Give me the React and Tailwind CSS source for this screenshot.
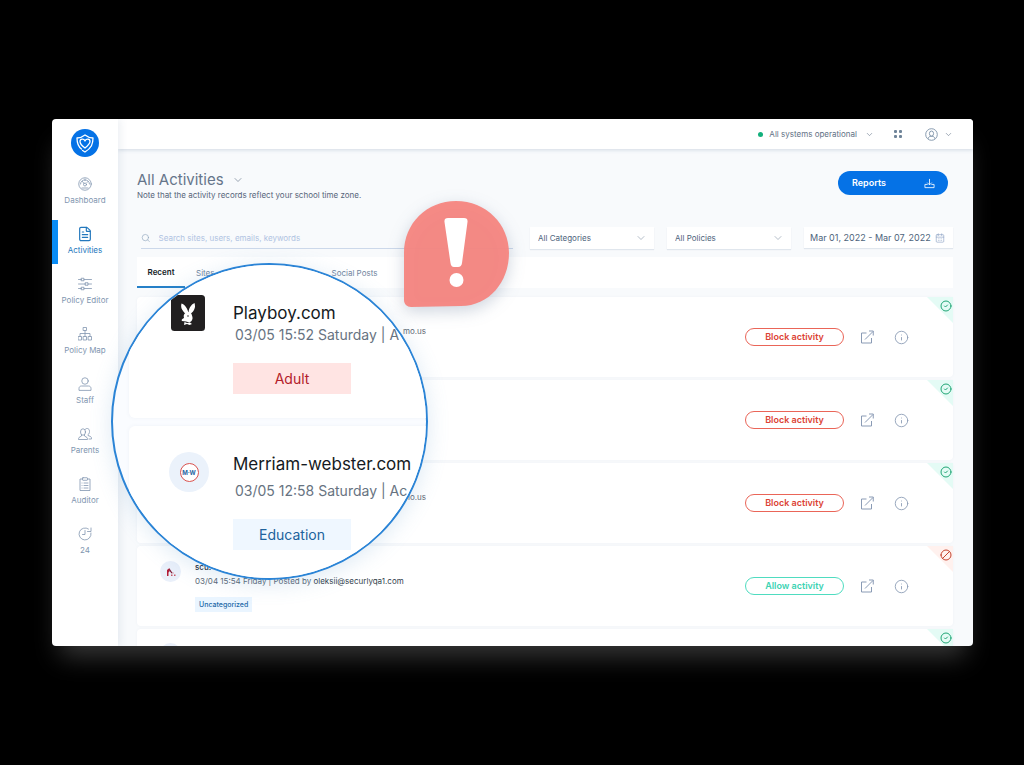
import React from "react";
import {
  CalendarDays,
  Ban,
  ChevronDown,
  CircleCheck,
  FileText,
  Info,
  Search,
} from "lucide-react";

const Icon = ({ children }) => (
  <svg
    viewBox="0 0 28 28"
    className="size-[14px]"
    fill="none"
    stroke="currentColor"
    strokeWidth="1.6"
    strokeLinecap="round"
    strokeLinejoin="round"
    aria-hidden="true"
  >
    {children}
  </svg>
);

const navItems = [
  {
    label: "Dashboard",
    icon: (
      <Icon>
        <circle cx="14" cy="14" r="12.5" />
        <circle cx="14" cy="15" r="3" />
        <path d="M12 13 9 9M5 14c0-11 18-11 18 0M8 22h12M14 4v3M20 9l-2 2" />
      </Icon>
    ),
  },
  {
    label: "Activities",
    active: true,
    icon: <FileText className="size-4" strokeWidth={1.8} />,
  },
  {
    label: "Policy Editor",
    icon: (
      <Icon>
        <path d="M1 5h6M12 5h15M1 14h14M20 14h7M1 23h6M12 23h15" />
        <rect x="7" y="2.5" width="5" height="5" />
        <rect x="15" y="11.5" width="5" height="5" />
        <rect x="7" y="20.5" width="5" height="5" />
      </Icon>
    ),
  },
  {
    label: "Policy Map",
    icon: (
      <Icon>
        <rect x="11" y="1" width="6" height="6" />
        <path d="M14 7v12M4 19v-6h20v6" />
        <rect x="1" y="19" width="6" height="7" />
        <rect x="11" y="19" width="6" height="7" />
        <rect x="21" y="19" width="6" height="7" />
      </Icon>
    ),
  },
  {
    label: "Staff",
    icon: (
      <Icon>
        <circle cx="14" cy="8" r="6.5" />
        <path d="M2 26v-3c0-3 2-5 5-5h14c3 0 5 2 5 5v3z" />
      </Icon>
    ),
  },
  {
    label: "Parents",
    icon: (
      <Icon>
        <ellipse cx="10" cy="10" rx="5" ry="6.5" />
        <path d="M7 16v2l-5 3c-1 1-1 3-1 4h18c0-1 0-3-1-4l-5-3v-2" />
        <path d="M14 5c1-3 9-4 9 4 0 3-1 5-3 6v2l5 2c2 1 2 3 2 5h-5" />
      </Icon>
    ),
  },
  {
    label: "Auditor",
    icon: (
      <Icon>
        <path d="M9 4H4v23h20V4h-5" />
        <rect x="9" y="1.5" width="10" height="5" rx="1" />
        <path d="M12 12h8M12 17h8M12 22h8M8 12h.1M8 17h.1M8 22h.1" />
      </Icon>
    ),
  },
  {
    label: "24",
    icon: (
      <Icon>
        <path d="M21 4a12 12 0 1 0 5 8M26 2v7h-7M14 7v8H9" />
      </Icon>
    ),
  },
];

const rows = [
  { id: 1, tail: "mo.us", blocked: false },
  { id: 2, blocked: false },
  { id: 3, tail: "lo.us", blocked: false },
  {
    id: 4,
    site: "scu.",
    time: "03/04 15:54 Friday | Posted by ",
    email: "oleksii@securlyqa1.com",
    category: "Uncategorized",
    blocked: true,
  },
  { id: 5, loading: true, blocked: false },
];

const Sidebar = () => (
  <aside className="z-10 flex w-[66px] shrink-0 flex-col items-center bg-white pt-[10px] shadow-[2px_0_8px_rgba(60,90,130,0.1)]">
    <a href="#home" aria-label="Home">
      <svg viewBox="0 0 56 56" className="size-7" fill="none">
        <circle cx="28" cy="28" r="28" fill="#0572e6" />
        <g
          stroke="white"
          strokeWidth="2.6"
          strokeLinecap="round"
          strokeLinejoin="round"
        >
          <path d="M21 40C14 35 12 28 12 18c6 0 11-2 16-6 5 4 10 6 16 6 0 12-3 20-16 28-2-1-3-2-5-3" />
          <path d="M28 38c-7-5-10-9-10-13 0-6 8-6 10-1 2-5 10-5 10 1 0 4-4 8-10 13z" />
        </g>
      </svg>
    </a>
    <nav className="mt-[13px] flex w-full flex-col gap-[6px]">
      {navItems.map((item) => (
        <a
          key={item.label}
          href={`#${item.label}`}
          className={
            item.active
              ? "flex h-11 flex-col items-center border-l-[6px] border-[#0a8cf5] pt-[6px] pr-[6px] text-[#2478bd]"
              : "flex h-11 flex-col items-center pt-[6px] text-[#8196b0]"
          }
        >
          <span className="flex h-4 items-center">{item.icon}</span>
          <span className="mt-[3px] text-[8px] leading-[10px] whitespace-nowrap">
            {item.label}
          </span>
        </a>
      ))}
    </nav>
  </aside>
);

const TopBar = () => (
  <header className="flex h-[30px] shrink-0 items-center justify-end bg-white pr-5 text-[#5f7185] shadow-[0_1px_4px_rgba(60,90,130,0.2)]">
    <button className="flex items-center text-[8px]">
      <span className="mr-[6px] size-[5px] rounded-full bg-[#13b07c]" />
      All systems operational
      <ChevronDown className="ml-2 size-[9px]" strokeWidth={1.5} />
    </button>
    <button className="ml-5" aria-label="Apps">
      <svg viewBox="0 0 16 16" className="size-2" fill="#6f8499">
        <rect x="0" y="0" width="6" height="6" rx="2" />
        <rect x="10" y="0" width="6" height="6" rx="2" />
        <rect x="0" y="10" width="6" height="6" rx="2" />
        <rect x="10" y="10" width="6" height="6" rx="2" />
      </svg>
    </button>
    <button className="ml-[23px] flex items-center gap-[6px]" aria-label="Account">
      <svg
        viewBox="0 0 28 28"
        className="size-[13px]"
        fill="none"
        stroke="#8094aa"
        strokeWidth="2"
      >
        <circle cx="14" cy="14" r="12.5" />
        <ellipse cx="14" cy="12" rx="4.5" ry="5.5" />
        <path d="M7 23c0-4 3-5 7-5s7 1 7 5" />
      </svg>
      <ChevronDown className="size-[9px]" strokeWidth={1.5} />
    </button>
  </header>
);

const FilterSelect = ({ label }) => (
  <div className="grid w-[124px] shrink-0 items-center bg-white shadow-[0_1px_1px_rgba(60,90,130,0.12)]">
    <select
      aria-label={label}
      className="col-start-1 row-start-1 h-[21px] w-full appearance-none px-2 text-[8px] text-[#4e647c] outline-none"
    >
      <option>{label}</option>
    </select>
    <ChevronDown
      className="pointer-events-none col-start-1 row-start-1 mr-[7px] size-3 justify-self-end text-[#8c9bac]"
      strokeWidth={1.3}
    />
  </div>
);

const Filters = () => (
  <div className="mt-[26px] flex gap-[13px]">
    <label className="mr-1 ml-1 flex h-[22px] flex-1 items-center gap-2 border-b border-[#ccd8ea]">
      <Search className="size-[10px] text-[#8fa5bd]" strokeWidth={1.6} />
      <input
        type="search"
        aria-label="Search"
        placeholder="Search sites, users, emails, keywords"
        className="w-full text-[8px] outline-none placeholder:text-[#b0c3e2]"
      />
    </label>
    <FilterSelect label="All Categories" />
    <FilterSelect label="All Policies" />
    <button className="flex h-[21px] w-[149px] shrink-0 items-center justify-between bg-white pr-2 pl-[6px] text-[9px] whitespace-nowrap text-[#4e647c] shadow-[0_1px_1px_rgba(60,90,130,0.12)]">
      Mar 01, 2022 - Mar 07, 2022
      <CalendarDays className="size-[10px] text-[#8fa5c5]" strokeWidth={1.6} />
    </button>
  </div>
);

const RowActions = ({ blocked }) => (
  <div className="ml-auto flex items-center text-[#8a9bb5]">
    <button
      className={
        blocked
          ? "h-[18px] w-[99px] rounded-full border border-[#4fdcc0] text-[9px] font-semibold text-[#3bd3b3]"
          : "h-[18px] w-[99px] rounded-full border border-[#ea6558] text-[9px] font-semibold text-[#dc4234]"
      }
    >
      {blocked ? "Allow activity" : "Block activity"}
    </button>
    <button className="ml-4" aria-label="Open site">
      <svg
        viewBox="0 0 28 28"
        className="size-[14px]"
        fill="none"
        stroke="currentColor"
        strokeWidth="2"
      >
        <path d="M13 6H3v20h20V16M10 19 26 3M18 2h8.5v9" />
      </svg>
    </button>
    <button className="ml-5" aria-label="Details">
      <Info className="size-[15px]" strokeWidth={1.4} />
    </button>
  </div>
);

const ActivityRow = ({ row }) => (
  <li className="relative flex h-20 shrink-0 items-center rounded-sm bg-white pr-11 shadow-[0_0_3px_rgba(60,90,130,0.05)]">
    {row.tail && (
      <p className="mb-3 w-[289px] text-right text-[8px] text-[#5f6a76]">
        {row.tail}
      </p>
    )}
    {row.loading && (
      <span className="mt-[14px] ml-[23px] size-[21px] self-start rounded-full bg-[#eaf0fa]" />
    )}
    {row.site && (
      <div className="flex gap-[14px] self-start pt-[15px] pl-[23px]">
        <span className="flex size-[21px] items-center justify-center rounded-full bg-[#eaf0fa]">
          <svg viewBox="0 0 20 20" className="size-[10px]">
            <path d="M2 18V6l5-4v7l-2 2v7z" fill="#b51e38" />
            <path d="m7 3 6 9-2 1-5-7z" fill="#7c1530" />
            <path d="M10 15h3v3h-3zM16 15h3v3h-3zM13 11h2v2h-2z" fill="#c65868" />
          </svg>
        </span>
        <div className="text-[8px] leading-[12px] text-[#5a6775]">
          <p className="font-medium text-[#1d2733]">{row.site}</p>
          <p className="mt-[2px] whitespace-nowrap">
            {row.time}
            <span className="text-[#333f4d]">{row.email}</span>
          </p>
          <span className="mt-[10px] inline-block bg-[#eaf5ff] px-1 py-[2px] text-[7px] leading-[11px] font-medium text-[#2369a8]">
            {row.category}
          </span>
        </div>
      </div>
    )}
    {!row.loading && <RowActions blocked={row.blocked} />}
    <span
      className={
        row.blocked
          ? "absolute top-0 right-0 size-[26px] bg-[#fff1ee] [clip-path:polygon(0_0,100%_0,100%_100%)]"
          : "absolute top-0 right-0 size-[26px] bg-[#e4fbf5] [clip-path:polygon(0_0,100%_0,100%_100%)]"
      }
    />
    {row.blocked ? (
      <Ban className="absolute top-[3px] right-[1px] size-3 -scale-x-100 text-[#c4442f]" />
    ) : (
      <CircleCheck className="absolute top-[3px] right-[1px] size-3 text-[#1fa574]" />
    )}
  </li>
);

const Lens = () => (
  <section className="absolute top-[144px] left-[59px] z-20 size-[317px] overflow-hidden rounded-full border-2 border-[#2b84d6] bg-[#fafcff] shadow-[0_4px_22px_rgba(90,150,200,0.2)]">
    <div className="ml-4 flex h-[153px] gap-7 rounded-bl-md bg-white pt-[30px] pl-[42px] shadow-[0_0_4px_rgba(60,90,130,0.06)]">
      <svg viewBox="0 0 68 72" className="h-9 w-[34px] shrink-0">
        <rect width="68" height="72" rx="7" fill="#211f20" />
        <g fill="white">
          <path d="M21 17c7 2 12 10 14 19l-5 3c-5-6-12-12-9-22z" />
          <path d="M47 16c3 9-1 16-8 22l-4-2c0-9 5-17 12-20z" />
          <path d="M29 36c6-4 12-1 13 5 2 5 1 8-1 11l-4 3-7-2-8-1c-2-2 0-4 4-6-1-4-1-8 3-10z" />
          <path d="m27 54 5 2 6-1 4 3-5 2-5-2-6 2z" />
        </g>
        <circle cx="34" cy="42" r="1.5" fill="#211f20" />
      </svg>
      <div className="whitespace-nowrap">
        <h2 className="mt-[6px] text-[17px] leading-6 text-[#151a22]">Playboy.com</h2>
        <p className="ml-[2px] text-[14px] leading-5 text-[#677381]">
          03/05 15:52 Saturday | A
        </p>
        <p className="mt-[18px] flex h-[31px] w-[118px] items-center justify-center bg-[#ffe4e3] text-[14px] text-[#b3202a]">
          Adult
        </p>
      </div>
    </div>
    <div className="mt-2 ml-4 flex h-[160px] gap-6 rounded-tl-md bg-white pt-[26px] pl-10 shadow-[0_0_4px_rgba(60,90,130,0.06)]">
      <span className="flex size-10 shrink-0 items-center justify-center rounded-full bg-[#ebf2fb]">
        <span className="flex size-[19px] items-center justify-center rounded-full border border-[#d9534f] bg-white text-[6px] font-bold text-[#27649f]">
          M·W
        </span>
      </span>
      <div className="whitespace-nowrap">
        <h2 className="text-[17px] leading-6 text-[#151a22]">Merriam-webster.com</h2>
        <p className="mt-[5px] ml-[2px] text-[14px] leading-5 text-[#677381]">
          03/05 12:58 Saturday | Ac
        </p>
        <p className="mt-[18px] flex h-[31px] w-[118px] items-center justify-center bg-[#eff7ff] text-[14px] text-[#20629c]">
          Education
        </p>
      </div>
    </div>
  </section>
);

const AlertBubble = () => (
  <svg
    viewBox="0 0 105 107"
    className="absolute top-[82px] left-[352px] z-30 h-[107px] w-[105px] drop-shadow-[0_5px_8px_rgba(50,80,120,0.25)]"
    role="img"
    aria-label="Alert"
  >
    <path
      d="M52 0C82 0 105 23 105 52s-20 53-48 53L7 106c-4 0-7-3-7-7V52C0 22 23 0 52 0z"
      fill="#f58580"
      fillOpacity="0.95"
    />
    <path
      d="M44 17h16q4 0 3.5 4L58 62q-.5 4-4 4h-4q-3 0-3.500-4L40.500 21q-.5-4 3.500-4z"
      fill="white"
    />
    <circle cx="52.5" cy="79" r="7" fill="white" />
  </svg>
);

const App = () => {
  return (
    <div className="h-screen bg-black py-[119px] pr-[51px] pl-[52px] font-[Inter,'Open_Sans',sans-serif]">
      <div className="relative flex h-full rounded shadow-[0_18px_24px_-8px_rgba(255,255,255,0.22)]">
        <div className="flex min-w-0 flex-1 overflow-hidden rounded">
          <Sidebar />
          <div className="flex min-w-0 flex-1 flex-col bg-[#f8fafc]">
            <TopBar />
            <main className="flex min-h-0 flex-1 flex-col pt-[21px] pr-5 pl-[19px]">
              <div className="flex justify-between pr-[5px]">
                <div>
                  <h1>
                    <button className="flex items-center gap-2 text-[15px] leading-5 text-[#66758a]">
                      All Activities
                      <ChevronDown className="size-3" strokeWidth={1.3} />
                    </button>
                  </h1>
                  <p className="text-[8px] leading-[11px] text-[#56657a]">
                    Note that the activity records reflect your school time zone.
                  </p>
                </div>
                <button className="mt-px flex h-6 w-[110px] items-center justify-between rounded-full bg-[#0572e6] pr-[13px] pl-[14px] text-[9px] font-semibold text-white">
                  Reports
                  <svg
                    viewBox="0 0 24 24"
                    className="size-[11px]"
                    fill="none"
                    stroke="currentColor"
                    strokeWidth="1.8"
                  >
                    <path d="M12 2v13M7 10l5 5 5-5M8 14H2v7h20v-7h-6" />
                  </svg>
                </button>
              </div>
              <Filters />
              <div className="mt-2 flex h-[31px] shrink-0 bg-white text-[8px] text-[#7186a0]">
                <button className="w-12 border-b-2 border-[#2680c8] font-semibold text-[#141c26]">
                  Recent
                </button>
                <button className="ml-[11px]">Sites</button>
                <button className="ml-[117px]">Social Posts</button>
              </div>
              <ul className="mt-[9px] flex min-h-0 flex-col gap-[3px]">
                {rows.map((row) => (
                  <ActivityRow key={row.id} row={row} />
                ))}
              </ul>
            </main>
          </div>
        </div>
        <Lens />
        <AlertBubble />
      </div>
    </div>
  );
};

export default App;
